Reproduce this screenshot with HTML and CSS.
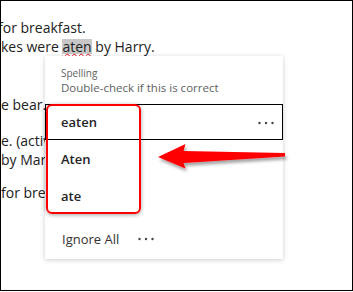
FILE: index.html
```html
<!DOCTYPE html>
<html>
<head>
<meta charset="utf-8">
<link rel="stylesheet" href="styles.css">
</head>
<body>
<div class="frame">
  <div class="doc">
    <p class="para p1"><span class="first">for breakfast.</span><br>kes were <span class="err">aten</span> by Harry.</p>
    <p class="para p2 clipped">e bear.</p>
    <p class="para p3 clipped">e. (active voice)<br>by Mary.</p>
    <p class="para p4 clipped">for breakfast.</p>
  </div>

  <div class="card">
    <div class="label">Spelling</div>
    <div class="sub">Double-check if this is correct</div>
    <div class="list">
      <div class="row focus">
        <span>eaten</span>
        <svg class="dots" width="16" height="4" viewBox="0 0 16 4"><circle cx="1.5" cy="2" r="1.2"/><circle cx="8" cy="2" r="1.2"/><circle cx="14.5" cy="2" r="1.2"/></svg>
      </div>
      <div class="row">Aten</div>
      <div class="row">ate</div>
    </div>
    <div class="ignore">
      <span>Ignore All</span>
      <svg class="dots" width="16" height="4" viewBox="0 0 16 4"><circle cx="1.5" cy="2" r="1.2"/><circle cx="8" cy="2" r="1.2"/><circle cx="14.5" cy="2" r="1.2"/></svg>
    </div>
    <div class="redbox"></div>
  </div>

  <svg class="arrow" width="351" height="289" viewBox="1 1 351 289">
    <defs>
      <filter id="sh" x="-20%" y="-50%" width="140%" height="200%">
        <feDropShadow dx="1.5" dy="3" stdDeviation="1.6" flood-color="#000" flood-opacity="0.35"/>
      </filter>
    </defs>
    <path d="M158 157 L185.5 144 L183.5 151 L285 153 L285 156.5 L183.5 163 L185.5 168.5 Z" fill="#ff0000" filter="url(#sh)"/>
  </svg>
</div>
</body>
</html>
```

FILE: styles.css
```css
html, body {
  margin: 0;
  padding: 0;
  background: #fff;
}

.frame {
  position: relative;
  width: 351px;
  height: 289px;
  border: 1px solid #000;
  overflow: hidden;
  background: #fff;
}

.doc {
  font-family: "Open Sans", "Liberation Sans", sans-serif;
  font-size: 14px;
  line-height: 19px;
  color: #222;
  white-space: nowrap;
}

.para {
  margin: 0;
}

.clipped {
  width: 44px;
  overflow: hidden;
}

.p1 { padding-top: 17px; text-indent: -3px; }
.p2 { margin-top: 39px; }
.p3 { margin-top: 17px; }
.p4 { margin-top: 14px; }

.err {
  display: inline-block;
  height: 15px;
  line-height: 15px;
  text-indent: 0;
  background: #c8c8c8;
  text-decoration: underline wavy #e81123;
  text-decoration-thickness: 1px;
  text-underline-offset: 1px;
}

.card {
  position: absolute;
  left: 44px;
  top: 55px;
  width: 238px;
  height: 203px;
  box-sizing: border-box;
  padding-top: 10px;
  background: #fff;
  box-shadow: 0 1px 5px rgba(0, 0, 0, 0.2);
  font-family: "Open Sans", "Liberation Sans", sans-serif;
  color: #242424;
}

.label {
  padding-left: 16px;
  font-size: 10px;
  line-height: 14px;
  color: #616161;
}

.sub {
  padding-left: 16px;
  font-size: 11.5px;
  line-height: 16px;
  color: #616161;
}

.list {
  margin-top: 8px;
}

.row {
  height: 37px;
  box-sizing: border-box;
  padding: 1px 8px 0 16px;
  font-size: 13px;
  font-weight: 600;
  line-height: 36px;
}

.row.focus {
  height: 36px;
  border: 1px solid #000;
  padding-left: 15px;
  line-height: 33px;
  display: flex;
  justify-content: space-between;
  align-items: center;
}

.dots {
  fill: #444;
  display: block;
}

.ignore {
  display: flex;
  align-items: center;
  gap: 19px;
  padding: 8px 0 0 17px;
  height: 33px;
  font-size: 13px;
  color: #333;
}

.redbox {
  position: absolute;
  left: 1px;
  top: 48px;
  width: 95px;
  height: 110px;
  box-sizing: border-box;
  border: 2px solid #ff0000;
  border-radius: 6px;
  box-shadow: 0 1px 4px rgba(0, 0, 0, 0.35);
}

.arrow {
  position: absolute;
  left: 0;
  top: 0;
  pointer-events: none;
}
```
